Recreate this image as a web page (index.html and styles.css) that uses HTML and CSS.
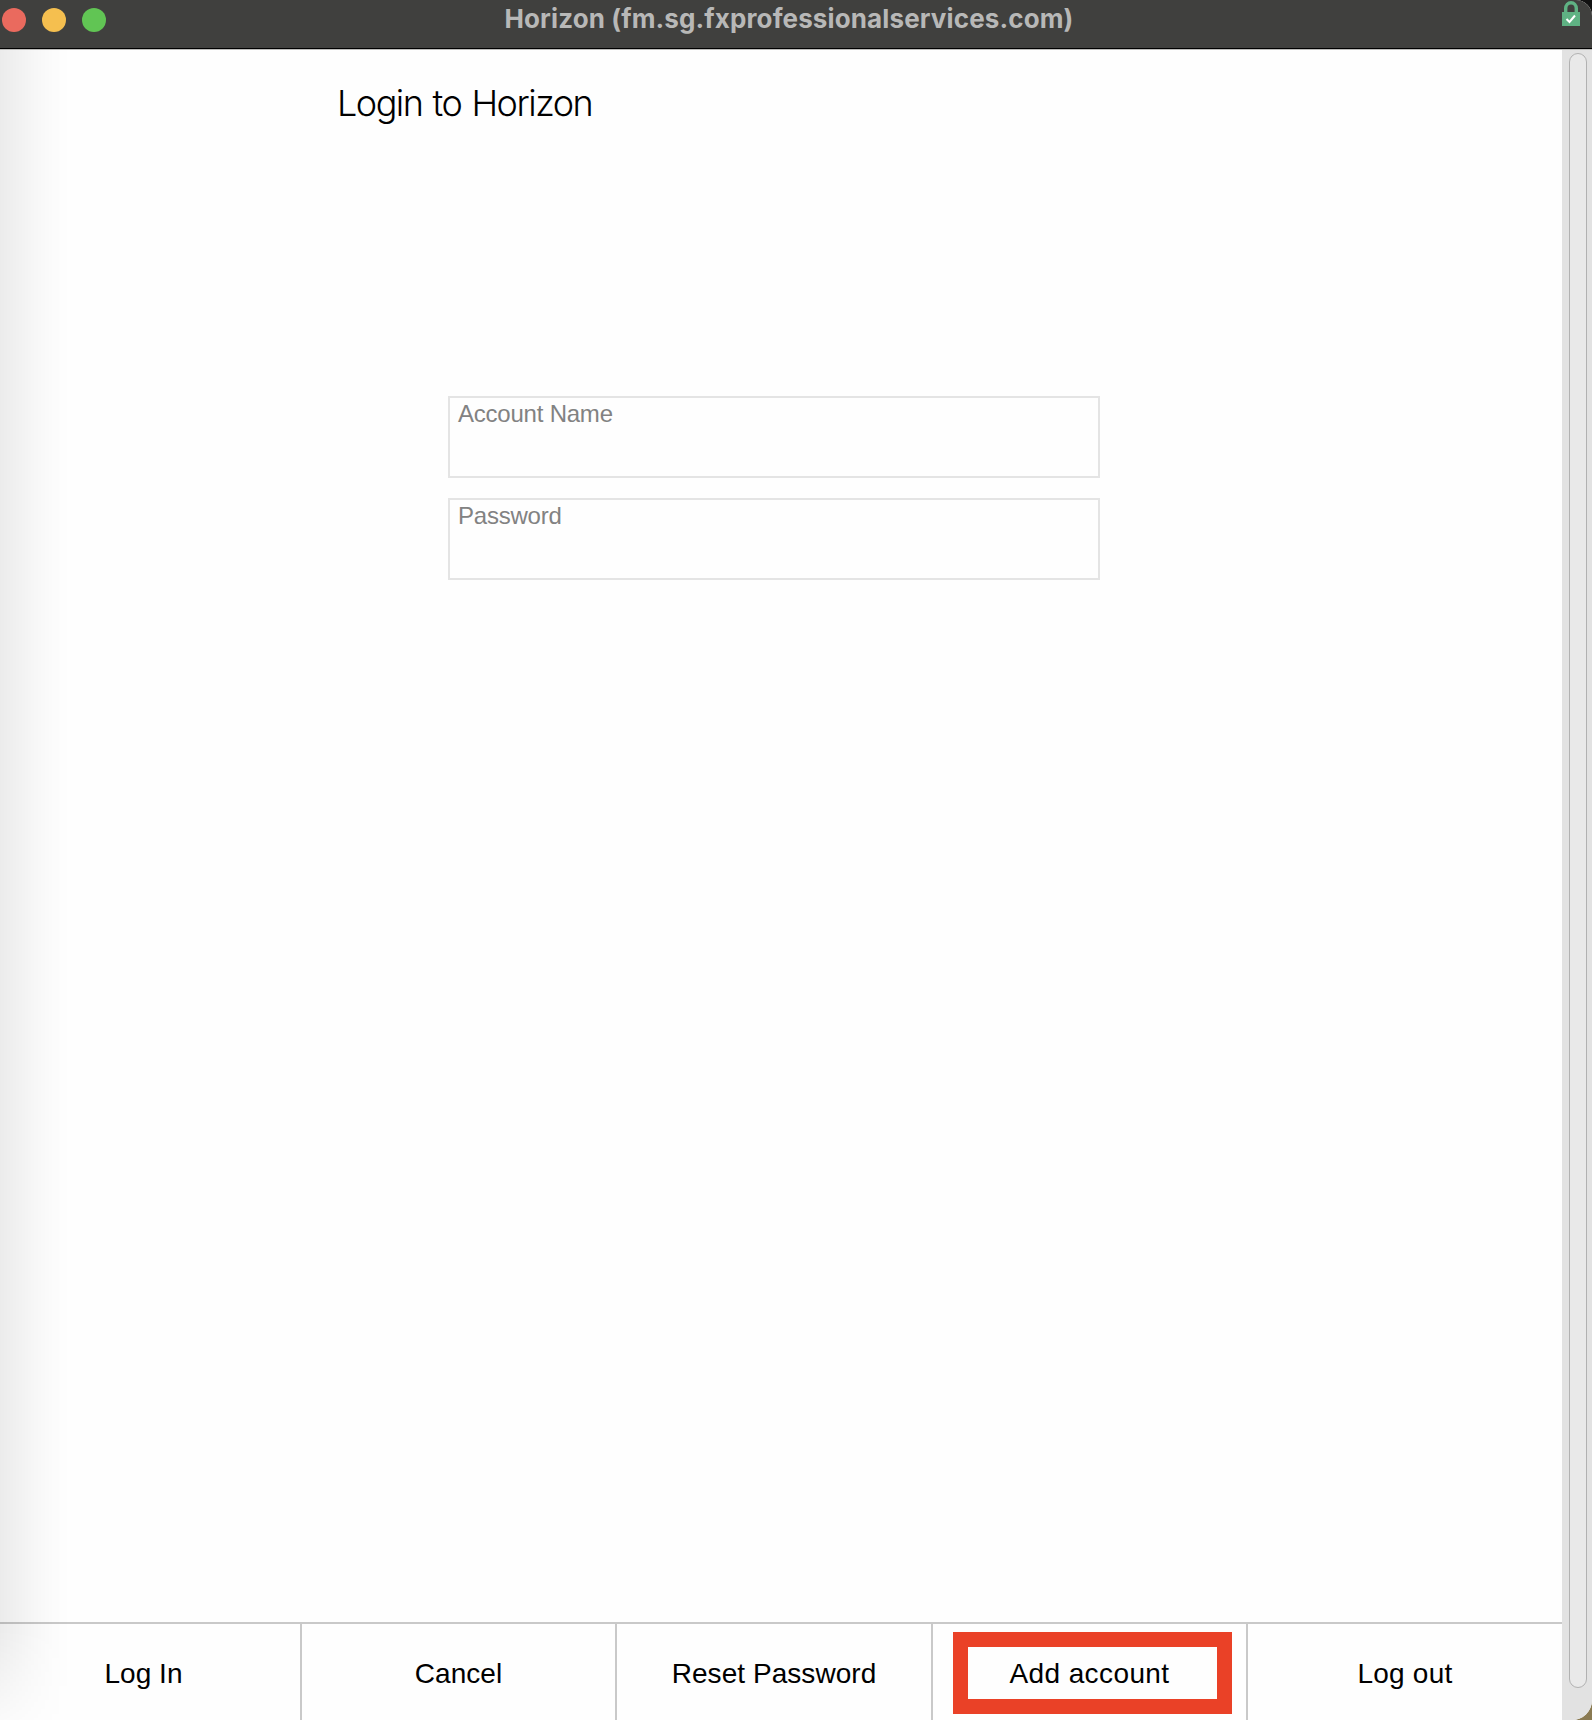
FILE: index.html
```html
<!DOCTYPE html>
<html lang="en">
<head>
<meta charset="utf-8">
<title>Horizon</title>
<link rel="stylesheet" href="styles.css">
</head>
<body>
<div class="window">
  <header class="titlebar">
    <div class="lights"><i class="light red"></i><i class="light yellow"></i><i class="light green"></i></div>
    <div class="window-title"><span>Horizon (fm.sg.fxprofessionalservices.com)</span></div>
    <svg class="lock" width="18" height="26" viewBox="0 0 18 26" aria-hidden="true">
      <path d="M3.7 13V8.500a5.300 5.800 0 0 1 10.600 0V13" fill="none" stroke="#5fb283" stroke-width="3.4"/>
      <path d="M0 12h18v14H0z" fill="#5fb283"/>
      <path d="M4.500 19l3 3 5.500-6.500" fill="none" stroke="#fff" stroke-width="2"/>
    </svg>
  </header>
  <div class="body">
    <main class="page">
      <h1>Login to Horizon</h1>
      <form class="fields">
        <div class="field"><span>Account Name</span></div>
        <div class="field"><span>Password</span></div>
      </form>
      <nav class="actions">
        <div class="action"><span>Log In</span></div>
        <div class="action"><span>Cancel</span></div>
        <div class="action"><span>Reset Password</span></div>
        <div class="action add"><span>Add account</span><div class="highlight"></div></div>
        <div class="action"><span>Log out</span></div>
      </nav>
    </main>
    <aside class="scrollbar"><div class="thumb"></div></aside>
  </div>
</div>
</body>
</html>
```
FILE: styles.css
```css
* { box-sizing: border-box; }
html { background: linear-gradient(#111 50%, #8a7a52 99%); }
body { margin: 0; overflow: hidden; font-family: "Liberation Sans", Arial, sans-serif; }
.window { height: 1720px; display: flex; flex-direction: column; border-radius: 0 16px 20px 0; overflow: hidden; background: #fefefe; }
.titlebar { height: 50px; flex: none; display: grid; grid-template-columns: 106px 1364px 1fr; background: #40403e; border-bottom: 1px solid #bdbdbb; box-shadow: inset 0 -1px #000; }
.lights { display: flex; gap: 16px; padding: 8px 0 0 2px; }
.light { width: 24px; height: 24px; border-radius: 50%; }
.red { background: #ea6a5e; }
.yellow { background: #f5bf4f; }
.green { background: #61c554; }
.window-title { padding-left: 2px; text-align: center; font: 700 26px/38px Inter, sans-serif; color: #b8b8b7; letter-spacing: .12px; }
.lock { margin: 0 0 0 92px; }
.body { flex: 1; display: flex; min-height: 0; }
.page { width: 1562px; position: relative; display: flex; flex-direction: column; overflow: hidden; }
.page::before { content: ""; position: absolute; inset: 0 auto 0 0; width: 72px; background: linear-gradient(90deg, rgba(0,0,0,.075), rgba(0,0,0,.03) 45%, rgba(0,0,0,.007) 75%, transparent); -webkit-mask-image: linear-gradient(#000 1580px, rgba(0,0,0,.2)); }
h1 { margin: 32px 0 0 337px; font: 300 36px/42px Inter, sans-serif; letter-spacing: -1.5px; word-spacing: 1.5px; color: #000; }
.fields { margin: 272px 0 0 448px; width: 652px; display: flex; flex-direction: column; gap: 20px; }
.field { height: 82px; border: 2px solid #e4e4e4; padding: 2px 8px; font-size: 24px; line-height: 28px; color: #828282; letter-spacing: -.22px; }
.actions { margin-top: auto; height: 98px; border-top: 2px solid #c9c9c9; display: grid; grid-template-columns: 302px 315px 316px 315px 314px; }
.action { position: relative; border-right: 2px solid #c9c9c9; display: flex; justify-content: center; padding-top: 34px; font-size: 28px; line-height: 32px; color: #000; letter-spacing: .05px; }
.action:first-child { padding-right: 13px; }
.action:last-child { border-right: 0; letter-spacing: .2px; }
.add { letter-spacing: .4px; }
.highlight { position: absolute; left: 20px; top: 8px; width: 279px; height: 82px; border: 15px solid #ea4127; }
.scrollbar { flex: 1; background: #e2e2e2; padding: 3px 5px 32px 7px; }
.thumb { height: 100%; border: 1px solid #b1b1b1; border-radius: 9px; background: #e9e9e9; }
```
